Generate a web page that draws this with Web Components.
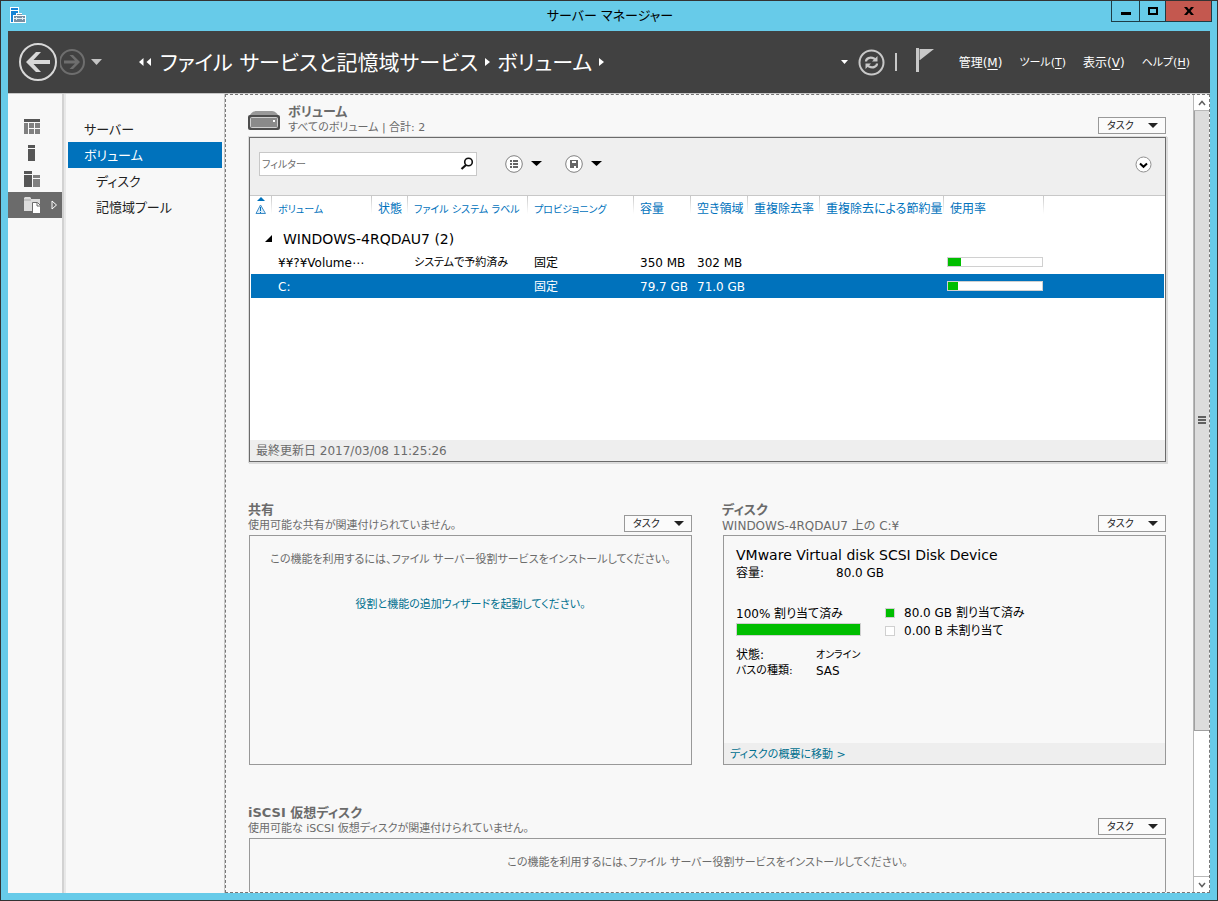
<!DOCTYPE html>
<html lang="ja">
<head>
<meta charset="utf-8">
<title>サーバー マネージャー</title>
<style>
  html, body { margin: 0; height: 100%; }
  body {
    font: 12px/16px "DejaVu Sans", "Noto Sans CJK JP", sans-serif;
    font-feature-settings: "palt";
    color: #000;
    background: #67cbe9;
  }
</style>
</head>
<body>
<app-window>
  <window-title slot="title">サーバー マネージャー</window-title>
  <app-header slot="header"></app-header>
  <icon-rail slot="rail"></icon-rail>
  <side-nav slot="nav">
    <side-item>サーバー</side-item>
    <side-item selected>ボリューム</side-item>
    <side-item child>ディスク</side-item>
    <side-item child>記憶域プール</side-item>
  </side-nav>
  <scroll-pane>
    <dashboard-tile primary foot>
      <drive-icon slot="icon"></drive-icon>
      <span slot="heading">ボリューム</span>
      <span slot="sub">すべてのボリューム | 合計: 2</span>
      <filter-bar></filter-bar>
      <volume-table></volume-table>
      <span slot="footer">最終更新日 2017/03/08 11:25:26</span>
    </dashboard-tile>
    <tile-row>
      <dashboard-tile>
        <span slot="heading">共有</span>
        <span slot="sub">使用可能な共有が関連付けられていません。</span>
        <empty-note>この機能を利用するには、ファイル サーバー役割サービスをインストールしてください。
          <text-link slot="action">役割と機能の追加ウィザードを起動してください。</text-link>
        </empty-note>
      </dashboard-tile>
      <dashboard-tile latin foot>
        <span slot="heading">ディスク</span>
        <span slot="sub">WINDOWS-4RQDAU7 上の C:¥</span>
        <disk-summary></disk-summary>
        <text-link slot="footer">ディスクの概要に移動 &gt;</text-link>
      </dashboard-tile>
    </tile-row>
    <dashboard-tile>
      <span slot="heading">iSCSI 仮想ディスク</span>
      <span slot="sub">使用可能な iSCSI 仮想ディスクが関連付けられていません。</span>
      <empty-note>この機能を利用するには、ファイル サーバー役割サービスをインストールしてください。</empty-note>
    </dashboard-tile>
  </scroll-pane>
</app-window>

<script>
const reset = `
  *, *::before, *::after { box-sizing: border-box; }
  button { font: inherit; font-feature-settings: inherit; color: inherit; background: none; border: 0; padding: 0; margin: 0; cursor: pointer; }
  a { color: inherit; text-decoration: none; }
  svg { display: block; }
`;
const define = (name, html) => customElements.define(name, class extends HTMLElement {
  constructor() {
    super();
    this.attachShadow({ mode: "open" }).innerHTML = html.replace("<style>", "<style>" + reset);
  }
});

define("app-window", `
<style>
  :host { display: grid; grid-template-rows: 30px 63px minmax(0, 1fr); height: 100vh; box-sizing: border-box;
    border: 1px solid #333; padding: 0 7px 7px; background: #67cbe9; }
  .body { display: grid; grid-template-columns: 54px 4px 159px minmax(0, 1fr); background: #f8f8f8; min-height: 0; }
  .split { background: linear-gradient(90deg, #d2d2d2 50%, #e8e8e8 50%); }
</style>
<slot name="title"></slot>
<slot name="header"></slot>
<div class="body"><slot name="rail"></slot><div class="split"></div><slot name="nav"></slot><slot></slot></div>`);

define("window-title", `
<style>
  :host { display: grid; grid-template-columns: 1fr auto 1fr; align-items: start; margin-right: -2px; }
  .logo { margin: 6px 0 0 2px; }
  .text { font-size: 13px; line-height: 30px; }
  .ctl { display: flex; justify-self: end; border: 1px solid #1d3c46; border-top: 0; }
  .ctl button { display: grid; place-items: center; height: 20px; width: 28px; border-right: 1px solid #1d3c46; }
  .ctl .max { width: 26px; }
  .ctl .close { width: 45px; border: 0; background: #c4584f; }
</style>
<svg class="logo" width="16" height="16" viewBox="0 0 16 16" shape-rendering="crispEdges">
  <path d="M0 0h9v6h3v2h4v8H0z" fill="#fff"/><path d="M1 1h7v2H1zM1 4h7v2H6v2H3v7H1z" fill="#1583d6"/>
  <path d="M7 7h5v1H7z" fill="#7890a4"/><path d="M4 9h11v6H4z" fill="#7890a4"/><path d="M4 11h11v1H4zM6 10h1v3H6zM12 10h1v3h-1z" fill="#e4edf2"/>
</svg>
<span class="text"><slot></slot></span>
<div class="ctl">
  <button aria-label="最小化"><svg width="10" height="8"><path d="M0 5h10v3H0z"/></svg></button>
  <button class="max" aria-label="最大化"><svg width="10" height="8"><path d="M1 1h8v6H1z" fill="none" stroke="#000" stroke-width="2"/></svg></button>
  <button class="close" aria-label="閉じる"><svg width="10" height="8" viewBox="0 0 10 8"><path d="M0 0h3l2 2.4L7 0h3L6.600 4 10 8H7L5 5.600 3 8H0l3.400-4z"/></svg></button>
</div>`);

define("app-header", `
<style>
  :host { display: flex; align-items: center; background: #414141; color: #fff; border-bottom: 1px solid #c8c8c8; padding: 0 20px 0 10px; }
  .fwd { margin-left: 2px; }
  .hist { margin-left: 5px; }
  nav { display: flex; align-items: center; flex: 1; margin-left: 35px; font-size: 21px; line-height: 32px; white-space: nowrap; }
  nav a { padding-top: 2px; }
  .more { margin-right: 8px; }
  nav .sep { margin: 0 6px; }
  .tools { display: flex; align-items: center; }
  .refresh { margin-left: 9px; }
  .bar { width: 2px; height: 18px; background: #c8c8c8; margin: 0 18px 0 10px; }
  .menu { display: flex; gap: 17px; margin-left: 24px; padding-top: 2px; white-space: nowrap; }
  .kana { font-size: 11px; }
  u { text-underline-offset: 2px; }
</style>
<button aria-label="戻る"><svg width="40" height="40" viewBox="0 0 40 40"><circle cx="20" cy="20" r="18" fill="none" stroke="#d8d8d8" stroke-width="2"/><path d="M8 20l10-10h5l-7.500 8H32v4H15.500l7.500 8h-5z" fill="#d8d8d8"/></svg></button>
<button class="fwd" aria-label="進む"><svg width="26" height="26" viewBox="0 0 26 26"><circle cx="12" cy="13" r="12" fill="none" stroke="#6e6e6e" stroke-width="2"/><path d="M20 13l-7-7H9.500l5.500 5.600H4v2.800h11L9.500 20H13z" fill="#6e6e6e"/></svg></button>
<button class="hist" aria-label="履歴"><svg width="12" height="7"><path d="M0 0h11L5.500 6z" fill="#c4c4c4"/></svg></button>
<nav>
  <button class="more" aria-label="上位の階層"><svg width="14" height="9"><path d="M5.500 0v8L1 4zM13 0v8L8.500 4z" fill="#fff"/></svg></button>
  <a href="#">ファイル サービスと記憶域サービス</a>
  <svg class="sep" width="7" height="9"><path d="M1 0v8l5-4z" fill="#fff"/></svg>
  <a href="#">ボリューム</a>
  <svg class="sep" width="7" height="9"><path d="M1 0v8l5-4z" fill="#fff"/></svg>
</nav>
<div class="tools">
  <button aria-label="更新オプション"><svg width="8" height="5"><path d="M0 0h7L3.500 4z" fill="#fff"/></svg></button>
  <button class="refresh" aria-label="更新"><svg width="27" height="27" viewBox="0 0 27 27" fill="none" stroke="#c8c8c8"><circle cx="13.500" cy="13.500" r="12" stroke-width="2"/><path d="M8 12.500c0-3 4-5 8-3l1.500 1M19 14.500c0 3-4 5-8 3l-1.500-1" stroke-width="2.200"/><path d="M19.500 7v5.500H14zM7.500 20v-5.500H13z" fill="#c8c8c8" stroke="none"/></svg></button>
  <span class="bar"></span>
  <button aria-label="通知"><svg width="20" height="28"><path d="M1 0h3v24H1zM4 1h15L5 12V1z" fill="#c8c8c8"/><path d="M4.500 1v11" stroke="#808080"/></svg></button>
</div>
<div class="menu">
  <button>管理(<u>M</u>)</button><button class="kana">ツール(<u>T</u>)</button><button>表示(<u>V</u>)</button><button class="kana">ヘルプ(<u>H</u>)</button>
</div>`);

define("icon-rail", `
<style>
  :host { display: block; padding-top: 20px; }
  button { display: flex; align-items: center; width: 100%; height: 26px; padding-left: 16px; gap: 11px; }
  .on { background: #6b6b6b; }
</style>
<button aria-label="ダッシュボード"><svg width="16" height="16" shape-rendering="crispEdges"><path d="M0 0h16v3H0z" fill="#565656"/><path d="M0 4h4v11H0zM5 4h5v5H5zM11 4h5v5h-5zM5 10h5v5H5zM11 10h5v5h-5z" fill="#808080"/></svg></button>
<button aria-label="ローカル サーバー"><svg width="16" height="16" shape-rendering="crispEdges"><path d="M4 0h7v3H4zM4 4h7v12H4z" fill="#565656"/></svg></button>
<button aria-label="すべてのサーバー"><svg width="16" height="16" shape-rendering="crispEdges"><path d="M0 0h8v3H0zM0 4h8v12H0z" fill="#565656"/><path d="M9 4h7v3H9zM9 8h7v8H9z" fill="#808080"/></svg></button>
<button class="on" aria-label="ファイル サービスと記憶域サービス"><svg width="16" height="16"><path d="M0 1l1-1h5l1 1v1h9v12H0z" fill="#dcdcdc"/><path d="M0 3h7" stroke="#aaa"/><path d="M8.500 5.500h5l3 3v8h-8z" fill="#fff" stroke="#6b6b6b"/><path d="M13 6v3h3" fill="none" stroke="#6b6b6b"/></svg>
<svg width="7" height="11"><path d="M1 1v8l4.500-4z" fill="none" stroke="#fff"/></svg></button>`);

define("side-nav", `
<style>:host { display: block; padding: 22px 2px 0 2px; border-right: 1px solid #c8c8c8; }</style>
<nav><slot></slot></nav>`);

define("side-item", `
<style>
  :host { display: block; font-size: 13px; line-height: 24px; color: #222; white-space: nowrap; }
  a { display: block; padding: 2px 0 0 16px; }
  :host([child]) a { padding-left: 28px; }
  :host([selected]) a { background: #0072bc; color: #fff; }
</style>
<a href="#"><slot></slot></a>`);

define("scroll-pane", `
<style>
  :host { display: grid; grid-template-columns: minmax(0, 1fr) 16px; min-height: 0; overflow: hidden; border: 1px dashed #777; }
  .view { overflow: hidden; min-height: 0; padding: 7px 27px 0 23px; display: flex; flex-direction: column; gap: 38px; }
  .bar { display: grid; grid-template-rows: 16px minmax(0, 1fr) 16px; background: #fff; border-left: 1px solid #b8b8b8; }
  .bar button { display: grid; place-items: center; }
  .up { border-bottom: 1px solid #b8b8b8; }
  .down { border-top: 1px solid #b8b8b8; }
  .thumb { height: 81%; display: grid; place-items: center; background: #dcdcdc; border: 1px solid #a0a0a0; border-width: 0 0 1px 1px; }
</style>
<div class="view"><slot></slot></div>
<div class="bar">
  <button class="up" aria-label="上へスクロール"><svg width="8" height="6"><path d="M1 5l3-3.500L7 5" fill="none" stroke="#606060" stroke-width="1.500"/></svg></button>
  <div><div class="thumb"><svg width="8" height="9" shape-rendering="crispEdges"><path d="M0 0h8v2H0zM0 3h8v2H0zM0 6h8v2H0z" fill="#606060"/></svg></div></div>
  <button class="down" aria-label="下へスクロール"><svg width="8" height="6"><path d="M1 1l3 3.500L7 1" fill="none" stroke="#606060" stroke-width="1.500"/></svg></button>
</div>`);

define("tile-row", `
<style>:host { display: grid; grid-template-columns: 1fr 1fr; gap: 31px; }</style>
<slot></slot>`);

define("task-button", `
<style>
  :host { display: block; }
  button { display: flex; align-items: center; justify-content: space-between; width: 68px; height: 17px; padding: 0 6px 0 8px; border: 1px solid #999; background: #fbfbfb; font-size: 10px; line-height: 15px; }
</style>
<button><span>タスク</span><svg width="11" height="6"><path d="M0 0h10L5 5z" fill="#222"/></svg></button>`);

define("dashboard-tile", `
<style>
  :host { display: block; flex: none; }
  header { display: flex; align-items: flex-end; height: 35px; padding-bottom: 2px; margin-left: -1px; color: #6b6b6b; white-space: nowrap; }
  .names { flex: 1; }
  h2 { margin: 0; font-size: 13px; line-height: 19px; font-weight: 700; }
  p { margin: 0; font-size: 11px; line-height: 14px; }
  :host([latin]) p { font-size: 12px; }
  task-button { color: #222; margin-bottom: 1px; }
  ::slotted([slot=icon]) { margin-right: 8px; }
  .box { display: flex; flex-direction: column; height: 230px; border: 1px solid #999; }
  :host([primary]) .box { height: 325px; border-color: #6b6b6b; background: #fff; box-shadow: 0 0 0 1px #dcdcdc, 1px 1px 0 1px #dcdcdc; }
  .content { flex: 1; }
  footer { display: none; color: #6b6b6b; background: #eee; padding: 2px 6px 0; line-height: 19px; }
  :host([foot]) footer { display: block; }
</style>
<header><slot name="icon"></slot><div class="names"><h2><slot name="heading"></slot></h2><p><slot name="sub"></slot></p></div><task-button></task-button></header>
<div class="box"><div class="content"><slot></slot></div><footer><slot name="footer"></slot></footer></div>`);

define("drive-icon", `
<style>:host { display: block; margin-bottom: 4px; }</style>
<svg width="32" height="20"><path d="M1 6C3 1 6 0 9 0h14c3 0 6 1 8 6z" fill="#999"/><rect y="4" width="32" height="15" rx="2" fill="#4e4e4e"/><rect x="2.500" y="6.500" width="27" height="10" rx="1" fill="#8a8a8a" stroke="#d0d0d0"/><path d="M25 9h2v2h-2z" fill="#fff"/></svg>`);

define("filter-bar", `
<style>
  :host { display: flex; align-items: center; box-sizing: border-box; height: 58px; padding: 0 13px 5px 9px; background: #efefef; border-bottom: 1px solid #c8c8c8; }
  label { display: flex; align-items: center; width: 218px; height: 24px; padding: 0 2px; margin-right: 28px; background: #fff; border: 1px solid #c8c8c8; }
  input { flex: 1; min-width: 0; border: 0; outline: 0; padding: 2px 0 0; font: inherit; font-size: 10px; font-feature-settings: inherit; background: none; }
  input::placeholder { color: #6b6b6b; opacity: 1; }
  .pick { display: flex; align-items: center; gap: 7px; margin-right: 23px; }
  .fold { margin-left: auto; }
</style>
<label><input type="text" placeholder="フィルター" aria-label="フィルター"><svg width="14" height="14"><circle cx="8.500" cy="5" r="3.800" fill="none" stroke="#111" stroke-width="1.600"/><path d="M6 8l-4.500 4" stroke="#111" stroke-width="2.200"/></svg></label>
<button class="pick" aria-label="列の表示"><svg width="18" height="18"><circle cx="9" cy="9" r="8.300" fill="#fff" stroke="#808080"/><path d="M5 5h2v2H5zM8 5h5v2H8zM5 8h2v2H5zM8 8h5v2H8zM5 11h2v2H5zM8 11h5v2H8z" fill="#666"/></svg><svg width="12" height="6"><path d="M1 0h11L6.500 5z"/></svg></button>
<button class="pick" aria-label="検索条件の保存"><svg width="18" height="18"><circle cx="9" cy="9" r="8.300" fill="#fff" stroke="#808080"/><path d="M5 5h8v8H5z" fill="#666"/><path d="M7 6h4v2H7zM9 11h2v2H9z" fill="#fff"/></svg><svg width="12" height="6"><path d="M1 0h11L6.500 5z"/></svg></button>
<button class="fold" aria-label="折りたたみ"><svg width="17" height="17"><circle cx="8.500" cy="8.500" r="7.500" fill="#fff" stroke="#909090"/><path d="M5 7.500l3.500 3.300L12 7.500" fill="none" stroke="#000" stroke-width="2"/></svg></button>`);

define("usage-bar", `
<style>
  :host { display: block; box-sizing: border-box; height: 10px; background: #fff; border: 1px solid #d0d0d0; }
  div { height: 100%; width: var(--used); background: #00be00; }
</style>
<div></div>`);

define("volume-table", `
<style>
  :host { display: block; padding: 0 1px; }
  table { width: 100%; table-layout: fixed; border-collapse: collapse; }
  th, td { padding: 0 0 0 6px; text-align: left; font-weight: 400; white-space: nowrap; height: 24px; }
  td { padding-top: 2px; }
  th { height: 26px; color: #0072bc; background: linear-gradient(#c8c8c8, #fff) right top / 1px 18px no-repeat; }
  th:last-child { background: none; }
  th button { white-space: nowrap; }
  th .kana { font-size: 10px; }
  .mixed { font-size: 11px; }
  th:first-child { padding: 0 0 0 4px; }
  .group td { height: 28px; padding: 7px 0 0 14px; font-size: 14px; line-height: 21px; }
  .group svg { display: inline-block; margin-right: 10px; vertical-align: 2px; }
  .sel { background: #0072bc; color: #fff; }
  td.meter { padding: 0 1px 0 3px; }
  .c0 { width: 21px; } .c1 { width: 100px; } .c2 { width: 36px; } .c3 { width: 120px; } .c4 { width: 106px; }
  .c5 { width: 57px; } .c7 { width: 72px; } .c8 { width: 124px; }
</style>
<table>
  <colgroup><col class="c0"><col class="c1"><col class="c2"><col class="c3"><col class="c4"><col class="c5"><col class="c5"><col class="c7"><col class="c8"><col class="c1"><col></colgroup>
  <thead><tr>
    <th scope="col"><button aria-label="警告"><svg width="11" height="20"><path d="M2 4h8L6 0z" fill="#0072bc"/><path d="M5.500 8L1 16.500h9.500z" fill="#dcecf8" stroke="#3c8cc8"/><path d="M5 10h1v4H5zM5 15h1v1H5z" fill="#0072bc"/></svg></button></th>
    <th scope="col"><button class="kana">ボリューム</button></th><th scope="col"><button>状態</button></th><th scope="col"><button class="kana">ファイル システム ラベル</button></th>
    <th scope="col"><button class="kana">プロビジョニング</button></th><th scope="col"><button>容量</button></th><th scope="col"><button>空き領域</button></th>
    <th scope="col"><button>重複除去率</button></th><th scope="col"><button>重複除去による節約量</button></th><th scope="col"><button>使用率</button></th><th></th>
  </tr></thead>
  <tbody>
    <tr class="group"><td colspan="11"><svg width="8" height="7"><path d="M7 0v7H0z"/></svg>WINDOWS-4RQDAU7 (2)</td></tr>
    <tr><td></td><td>¥¥?¥Volume⋯</td><td></td><td class="mixed">システムで予約済み</td><td>固定</td><td>350 MB</td><td>302 MB</td><td></td><td></td><td class="meter"><usage-bar style="--used:14%"></usage-bar></td><td></td></tr>
    <tr class="sel"><td></td><td>C:</td><td></td><td></td><td>固定</td><td>79.7 GB</td><td>71.0 GB</td><td></td><td></td><td class="meter"><usage-bar style="--used:11%"></usage-bar></td><td></td></tr>
  </tbody>
</table>`);

define("empty-note", `
<style>
  :host { display: block; padding-top: 16px; text-align: center; font-size: 11px; color: #6b6b6b; white-space: nowrap; }
  p { margin: 0 0 29px; }
</style>
<p><slot></slot></p><slot name="action"></slot>`);

define("text-link", `
<style>:host { display: inline; font-size: 11px; color: #00708f; }</style>
<a href="#"><slot></slot></a>`);

define("disk-summary", `
<style>
  :host { display: block; padding: 9px 12px 0; white-space: nowrap; }
  h3 { margin: 0; font-size: 14px; line-height: 20px; font-weight: 400; }
  dl { display: grid; grid-template-columns: 80px auto; margin: 0; }
  dl.cap { grid-template-columns: 100px auto; }
  dd { margin: 0; }
  .kana { font-size: 10px; }
  .mixed { font-size: 11px; }
  .alloc { display: flex; gap: 24px; margin: 23px 0 7px; }
  .used { width: 125px; }
  .used p { margin: 0; padding-top: 2px; line-height: 17px; }
  .used usage-bar { height: 13px; }
  ul { list-style: none; margin: 0; padding: 0; }
  li { display: flex; align-items: center; gap: 9px; line-height: 18px; }
  li usage-bar { width: 10px; }
</style>
<h3>VMware Virtual disk SCSI Disk Device</h3>
<dl class="cap"><dt>容量:</dt><dd>80.0 GB</dd></dl>
<div class="alloc">
  <div class="used"><p>100% 割り当て済み</p><usage-bar style="--used:100%"></usage-bar></div>
  <ul><li><usage-bar style="--used:100%"></usage-bar>80.0 GB 割り当て済み</li><li><usage-bar style="--used:0%"></usage-bar>0.00 B 未割り当て</li></ul>
</div>
<dl><dt>状態:</dt><dd class="kana">オンライン</dd><dt class="mixed">バスの種類:</dt><dd>SAS</dd></dl>`);
</script>
</body>
</html>
